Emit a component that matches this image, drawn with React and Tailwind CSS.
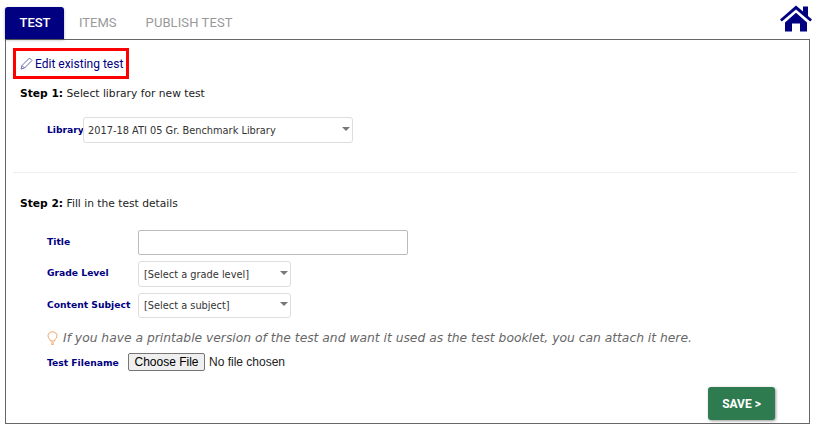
import React from "react";

function Sel({ w, h, text, pl }) {
  return (
    <div className={`relative flex items-center rounded-[3px] border border-[#ddd] bg-white pt-[2px] text-[#333] text-[9.8px] font-['DejaVu_Sans',sans-serif] ${pl} ${w} ${h}`}>
      {text}
      <span className="absolute right-[1px] top-0 bottom-[3px] w-[11px] flex items-center justify-center">
        <svg width="8" height="4" viewBox="0 0 8 4"><path d="M0 0h8L4 4z" fill="#777" /></svg>
      </span>
    </div>
  );
}

const labelCls = "font-['DejaVu_Sans',sans-serif] text-[9.2px] font-bold text-[#000080]";
const stepCls = "font-['DejaVu_Sans',sans-serif] text-[10.7px] text-[#222]";

export default function App() {
  return (
    <div className="w-[816px] h-[429px] bg-white overflow-hidden px-[5px] font-['DejaVu_Sans',sans-serif]">
      <div className="flex items-end h-[39px]">
        <div className="w-[59px] h-[32px] pl-[1px] bg-[#000080] rounded-t-[3px] text-white flex items-center justify-center font-['Roboto',sans-serif] text-[13px] font-medium shadow-[0_1px_3px_rgba(0,0,0,0.3)]">TEST</div>
        <div className="h-[32px] flex items-center ml-[15px] text-[#999] font-['Roboto',sans-serif] text-[13px]">ITEMS</div>
        <div className="h-[32px] flex items-center ml-[29px] text-[#999] font-['Roboto',sans-serif] text-[13px] tracking-[0.1px]">PUBLISH TEST</div>
        <svg className="ml-auto mr-[-1px] mb-[7px]" width="32" height="27" viewBox="0 0 32 27">
          <path d="M0 14.5L16 0.5l7 6V1.5H28v9.6l4 3.4-1.8 2L16 4.5 1.8 16.5z" fill="#000080" />
          <path d="M5 17.5L16 7.8l11 9.7V26.5H20V18.5h-8v8H5z" fill="#000080" />
        </svg>
      </div>
      <div className="h-[385px] w-[805px] border border-[#666] pt-[8px]">
        <div className="ml-[7px] w-[116px] h-[31px] border-[3px] border-[#f00] flex items-center pl-[4px] gap-[2px] text-[#000080] font-['Roboto',sans-serif] text-[12px] whitespace-nowrap">
          <svg className="shrink-0" width="13" height="13" viewBox="0 0 13 13" fill="none" stroke="#6b6bb0" strokeWidth="1"><path d="M1 12l1-3.5L9.5 1 12 3.5 4.5 11z" /><path d="M2 8.5L4.5 11" /></svg>
          <span>Edit existing test</span>
        </div>
        <div className={`${stepCls} ml-[14px] mt-[7px] h-[16px] leading-[16px]`}><b className="font-bold text-black">Step 1:</b> Select library for new test</div>
        <div className="ml-[41px] mt-[15px] flex items-center h-[26px]">
          <span className={`${labelCls} w-[36px]`}>Library</span>
          <Sel w="w-[270px]" h="h-[26px]" pl="pl-[4px]" text="2017-18 ATI 05 Gr. Benchmark Library" />
        </div>
        <div className="mt-[29px] ml-[7px] mr-[12px] border-t border-[#eee]" />
        <div className={`${stepCls} ml-[14px] mt-[23px] h-[16px] leading-[16px]`}><b className="font-bold text-black">Step 2:</b> Fill in the test details</div>
        <div className="ml-[41px] mt-[18px] flex items-center h-[25px]">
          <span className={`${labelCls} w-[91px] pb-[2px]`}>Title</span>
          <div className="w-[270px] h-[25px] border border-[#bbb] rounded-[2px]" />
        </div>
        <div className="ml-[41px] mt-[6px] flex items-center h-[26px]">
          <span className={`${labelCls} w-[91px] pb-[2px]`}>Grade Level</span>
          <Sel w="w-[153px]" h="h-[26px]" pl="pl-[5px]" text="[Select a grade level]" />
        </div>
        <div className="ml-[41px] mt-[6px] flex items-center h-[25px]">
          <span className={`${labelCls} w-[91px] pb-[1px]`}>Content Subject</span>
          <Sel w="w-[153px]" h="h-[25px]" pl="pl-[5px]" text="[Select a subject]" />
        </div>
        <div className="ml-[41px] mt-[12px] flex items-center h-[16px] text-[#666] italic text-[12.3px] whitespace-nowrap">
          <svg className="mr-[5px] shrink-0" width="11" height="14" viewBox="0 0 11 14" fill="none" stroke="#f0a060" strokeWidth="1"><path d="M3.5 10C3 8 1 7 1 4.8a4.5 4 0 0 1 9 0C10 7 8 8 7.5 10z" /><path d="M4 12h3M4.5 13.5h2" /></svg>
          If you have a printable version of the test and want it used as the test booklet, you can attach it here.
        </div>
        <div className="ml-[41px] mt-[7px] flex items-center h-[18px]">
          <span className={`${labelCls} w-[81px] whitespace-nowrap pt-[1px]`}>Test Filename</span>
          <div className="w-[77px] h-[18px] border border-[#767676] rounded-[2px] bg-[#efefef] text-black text-[12px] font-['Liberation_Sans',sans-serif] flex items-center justify-center">Choose File</div>
          <span className="ml-[4px] text-[12px] text-[#222] font-['Liberation_Sans',sans-serif]">No file chosen</span>
        </div>
        <div className="flex justify-end mr-[34px] mt-[16px]">
          <div className="w-[67px] h-[33px] rounded-[3px] bg-[#2e7b4f] text-white font-['Roboto',sans-serif] text-[12px] font-bold flex items-center justify-center shadow-[1px_1px_3px_rgba(0,0,0,0.4)]">SAVE &gt;</div>
        </div>
      </div>
    </div>
  );
}
